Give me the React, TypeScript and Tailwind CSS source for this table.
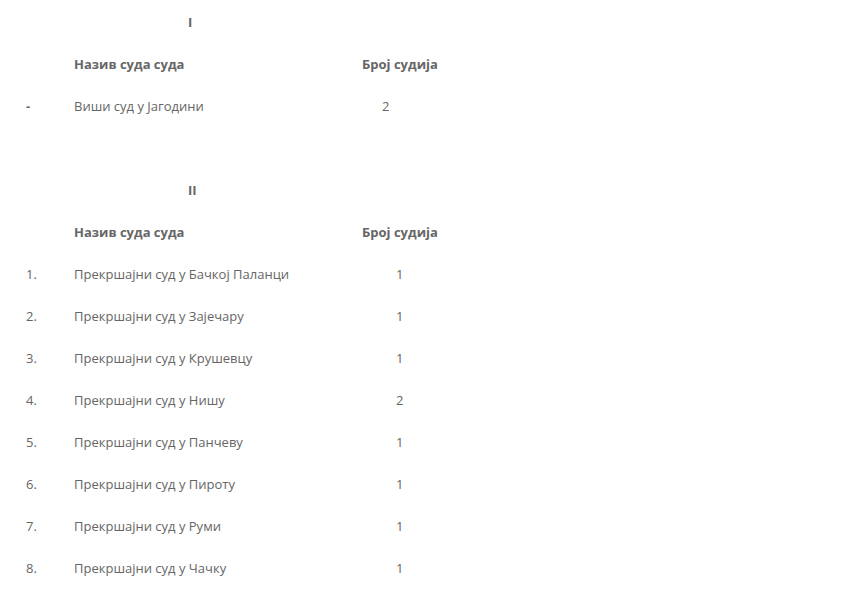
const font = { fontFamily: '"Open Sans", "Liberation Sans", sans-serif' };

type Row = { no: string; name: string; count: string };

const first: Row[] = [{ no: "-", name: "Виши суд у Јагодини", count: "2" }];

const second: Row[] = [
  { no: "1.", name: "Прекршајни суд у Бачкој Паланци", count: "1" },
  { no: "2.", name: "Прекршајни суд у Зајечару", count: "1" },
  { no: "3.", name: "Прекршајни суд у Крушевцу", count: "1" },
  { no: "4.", name: "Прекршајни суд у Нишу", count: "2" },
  { no: "5.", name: "Прекршајни суд у Панчеву", count: "1" },
  { no: "6.", name: "Прекршајни суд у Пироту", count: "1" },
  { no: "7.", name: "Прекршајни суд у Руми", count: "1" },
  { no: "8.", name: "Прекршајни суд у Чачку", count: "1" },
];

const Section = ({ title, rows, countPad }: { title: string; rows: Row[]; countPad: string }) => (
  <div>
    <div className="h-[42px] flex items-center pl-[162px] font-bold">{title}</div>
    <div className="h-[42px] grid grid-cols-[48px_288px_auto] items-center font-bold">
      <div />
      <div>Назив суда суда</div>
      <div>Број судија</div>
    </div>
    {rows.map((r) => (
      <div key={r.no + r.name} className="h-[42px] grid grid-cols-[48px_288px_auto] items-center">
        <div className={r.no === "-" ? "font-bold" : ""}>{r.no}</div>
        <div>{r.name}</div>
        <div className={countPad}>{r.count}</div>
      </div>
    ))}
  </div>
);

const App = () => {
  return (
    <div className="min-h-screen bg-white text-[13px] text-[#666] pl-[26px] pt-[2px]" style={font}>
      <Section title="I" rows={first} countPad="pl-[20px]" />
      <div className="h-[42px]" />
      <Section title="II" rows={second} countPad="pl-[34px]" />
    </div>
  );
};

export default App;
